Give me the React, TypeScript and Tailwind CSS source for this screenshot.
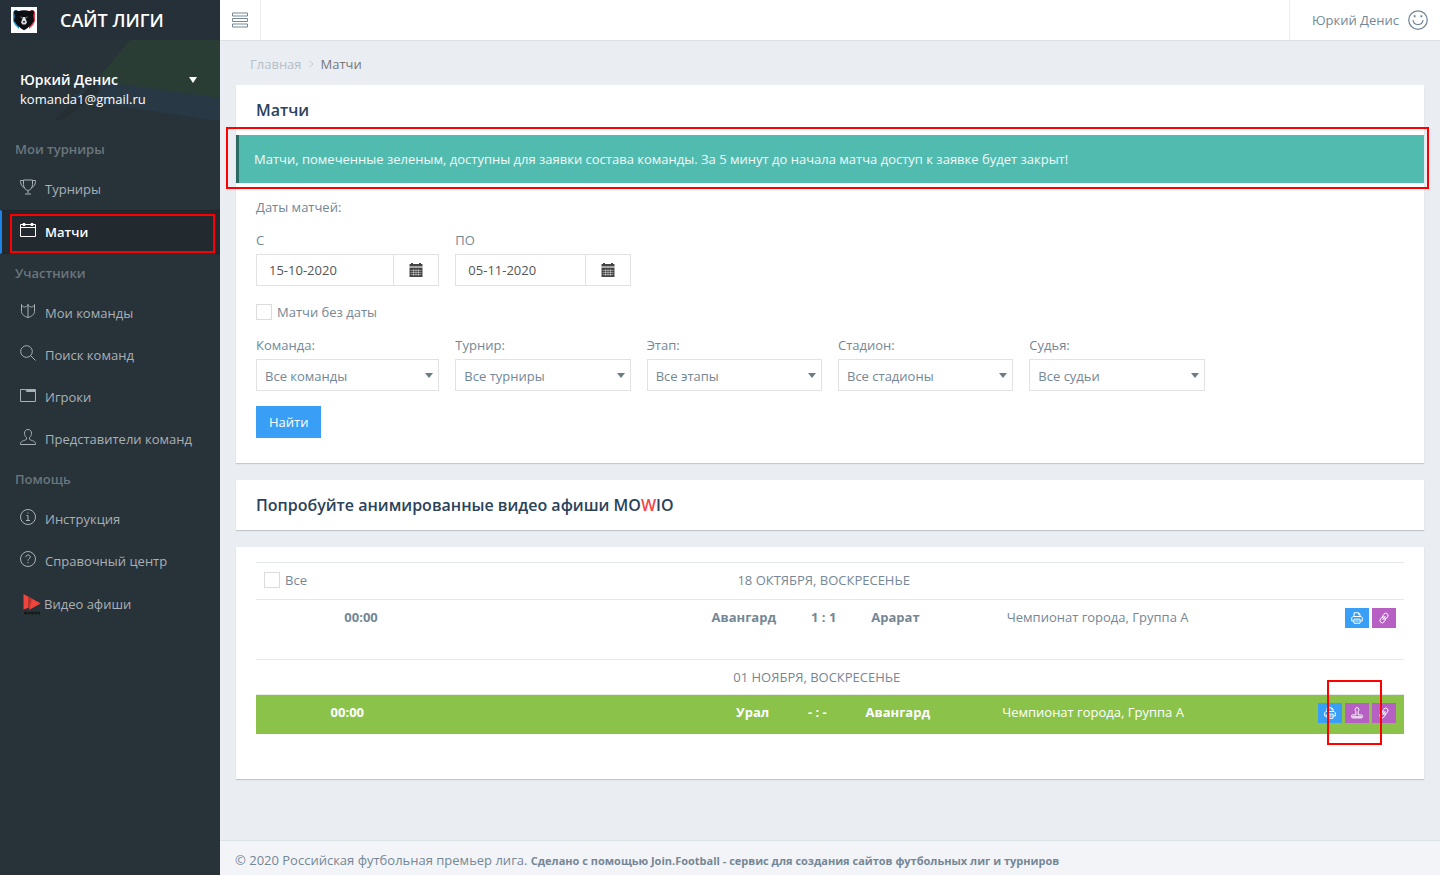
import React from 'react';

interface MenuItem {
    title: string;
    icon: React.ReactNode;
    active?: boolean;
}

interface MenuGroup {
    title: string;
    items: MenuItem[];
}

const Icon = ({ children, size = 16 }: { children: React.ReactNode; size?: number }) => (
    <svg width={size} height={size} viewBox="0 0 16 16" fill="none" stroke="currentColor" strokeWidth={1} className="shrink-0" aria-hidden="true">
        {children}
    </svg>
);

const TrophyIcon = () => (
    <Icon>
        <path d="M3.5 1h9v4.500c0 3-1.700 5.500-4.500 6-2.800-.5-4.500-3-4.500-6V1zM3.500 1.500h-3c0 3.500 1 6 4.500 7.500M12.500 1.500h3c0 3.500-1 6-4.500 7.500M8 11.500v3M5 15h6" />
    </Icon>
);

const CalendarIcon = () => (
    <Icon>
        <path d="M.5 2.500h15v12H.5zM.5 5.500h15M3 1.500h2v2H3zM11 1.500h2v2h-2z" />
    </Icon>
);

const ShieldIcon = () => (
    <Icon>
        <path d="M8 1.500C7.500 3 6 4 4.500 4 3 4 1.800 3.200 1.500 1.500v7C1.500 11.500 4.500 13.500 8 14.500c3.500-1 6.500-3 6.500-6v-7C14.200 3.200 13 4 11.500 4 10 4 8.500 3 8 1.500zM8 1.500v13" />
    </Icon>
);

const SearchIcon = () => (
    <Icon>
        <circle cx="6.500" cy="6.500" r="5.800" />
        <path d="M10.500 10.500l5 5" />
    </Icon>
);

const FolderIcon = () => (
    <Icon>
        <path d="M.5 2.500h5l1 2h9v10H.5zM6 2.500h9.500v2M6.500 3.500h9" />
    </Icon>
);

const UserIcon = () => (
    <Icon>
        <path d="M8 .5C5.800.5 4.500 2 4.500 4.200c0 1.800.7 3.300 2 4.300v1.500C6.500 11.500.5 11.500.5 14.500v1h15v-1c0-3-6-3-6-4.500V8.500c1.300-1 2-2.500 2-4.300C11.500 2 10.200.5 8 .5z" />
    </Icon>
);

const InfoIcon = () => (
    <Icon>
        <circle cx="8" cy="8" r="7.500" />
        <path d="M6.500 6.500H8v5M6 11.500h4M7.500 4h1" />
    </Icon>
);

const HelpIcon = () => (
    <Icon>
        <circle cx="8" cy="8" r="7.500" />
        <path d="M5.800 6.200C5.800 4.800 6.700 4 8 4s2.300.8 2.300 2c0 1.500-2.300 1.700-2.300 3.700M8 11v1.200" />
    </Icon>
);

const MowioIcon = () => (
    <svg width="18" height="23" viewBox="0 0 18 23" className="shrink-0" aria-hidden="true">
        <path d="M.5 1L17.500 10.500.5 16.500z" fill="#f0453c" />
        <path d="M5 3.500v12l8-7.500z" fill="#b8322e" />
        <path d="M9 6l8.500 4.500L6 17z" fill="#f0453c" />
        <path d="M1 20h16" stroke="#14191c" strokeWidth="2.500" strokeDasharray="3 .5" />
    </svg>
);

const PrinterIcon = () => (
    <Icon size={12}>
        <path strokeWidth={1.300} d="M4 6V1h6l2 2v3M4 12H1V7.500L2.500 6h11L15 7.500V12h-3M4 9.500h8V15H4zM6 12h4M10 1v2h2" />
    </Icon>
);

const LinkIcon = () => (
    <Icon size={12}>
        <g strokeWidth={1.200} transform="rotate(35 8 8)">
            <rect x="5" y=".8" width="6" height="8.500" rx="3" />
            <rect x="5" y="6.700" width="6" height="8.500" rx="3" />
            <path d="M8 5v6" />
        </g>
    </Icon>
);

const StampIcon = () => (
    <Icon size={12}>
        <path strokeWidth={1.300} d="M6.500 10.500V6C4.800 4.500 5 .8 8 .8S11.200 4.500 9.500 6v4.500H14c1.900 0 1.900 4 0 4H2c-1.900 0-1.900-4 0-4zM1.500 13h13" />
    </Icon>
);

const SmileIcon = () => (
    <Icon size={20}>
        <circle cx="8" cy="8" r="7.400" />
        <path d="M4 8c.3 2.300 1.900 3.700 4 3.700S11.700 10.300 12 8" />
        <path d="M5.300 4.200v1.600M10.700 4.200v1.600" strokeWidth={1.500} />
    </Icon>
);

const DateIcon = () => (
    <svg width="14" height="14" viewBox="0 0 14 14" fill="#444" aria-hidden="true">
        <path d="M.5 1H2V0h2v1h6V0h2v1h1.500v2.500H.5z" />
        <path d="M.5 3.500h13V5H.5z" fill="#aaa" />
        <path d="M.5 5h13v9H.5z" />
        <path d="M1.500 7.500h11M1.500 9.500h11M1.500 11.500h11M4.500 6v7M7 6v7M9.500 6v7" stroke="#fff" strokeWidth=".4" />
    </svg>
);

const BearLogo = () => (
    <svg width="26" height="26" viewBox="0 0 26 26" className="shrink-0" aria-hidden="true">
        <path fill="#fff" d="M0 0h26v26H0z" />
        <path fill="#1ba3dc" d="M2 5l2-2 4 1v18l-4-4-2-4z" />
        <path fill="#ee3340" d="M24 5l-2-2-4 1v18l4-4 2-4z" />
        <path fill="#0b0d10" d="M3 5.500C3 3 5.500 2.500 7 4.200 11 3 15 3 19 4.200 20.500 2.500 23 3 23 5.500L22.300 9l.7 5-3 4-4 3.500-3 1.800-3-1.800L6 18l-3-4 .7-5z" />
        <path fill="#70757a" d="M8.500 9.500l3 .5-.5 1.500zM17.500 9.500l-3 .5.5 1.500z" />
        <path fill="#d9dcde" d="M12 10h2l2 5.500-1.500 2h-3L10 15.500z" />
        <path fill="#0b0d10" d="M12 14h2l-.5 1.700h-1z" />
    </svg>
);

const menu: MenuGroup[] = [
    {
        title: 'Мои турниры',
        items: [
            { title: 'Турниры', icon: <TrophyIcon /> },
            { title: 'Матчи', icon: <CalendarIcon />, active: true },
        ],
    },
    {
        title: 'Участники',
        items: [
            { title: 'Мои команды', icon: <ShieldIcon /> },
            { title: 'Поиск команд', icon: <SearchIcon /> },
            { title: 'Игроки', icon: <FolderIcon /> },
            { title: 'Представители команд', icon: <UserIcon /> },
        ],
    },
    {
        title: 'Помощь',
        items: [
            { title: 'Инструкция', icon: <InfoIcon /> },
            { title: 'Справочный центр', icon: <HelpIcon /> },
        ],
    },
];

const filters = [
    { id: 'team', label: 'Команда:', value: 'Все команды' },
    { id: 'tournament', label: 'Турнир:', value: 'Все турниры' },
    { id: 'stage', label: 'Этап:', value: 'Все этапы' },
    { id: 'stadium', label: 'Стадион:', value: 'Все стадионы' },
    { id: 'referee', label: 'Судья:', value: 'Все судьи' },
];

// Red frame drawn over the element it highlights
const Highlight = ({ className }: { className: string }) => (
    <span className={`pointer-events-none absolute z-10 border-2 border-[#ff0000] ${className}`} />
);

const Sidebar = () => (
    <aside className="w-[220px] shrink-0 bg-[#283239] text-[#a9b1b6]">
        <div className="flex h-10 items-center gap-[23px] bg-[#263038] pl-[11px] text-white">
            <BearLogo />
            <span className="text-lg font-semibold">САЙТ ЛИГИ</span>
        </div>
        <div className="relative h-20">
            <svg className="absolute inset-0 h-full w-full" viewBox="0 0 220 80" preserveAspectRatio="none" aria-hidden="true">
                <path d="M130 0h90v58L95 42z" fill="#2a3d35" />
                <path d="M95 42l25 2 100 14v22h-10L70 58z" fill="#283845" />
                <path d="M95 42L54 80h8l38-28z" fill="#242e33" />
            </svg>
            <div className="relative px-5 pt-[30px] text-white">
                <button type="button" className="flex w-full items-center justify-between pr-[3px] text-sm leading-5 font-semibold">
                    Юркий Денис
                    <svg width="8" height="6" viewBox="0 0 8 6" fill="currentColor" aria-hidden="true">
                        <path d="M0 0h8L4 6z" />
                    </svg>
                </button>
                <div className="leading-[18px]">komanda1@gmail.ru</div>
            </div>
        </div>
        <nav className="pt-[10px]">
            {menu.map(group => (
                <div key={group.title}>
                    <div className="flex h-[38px] items-center px-[15px] font-semibold text-[#6b767d]">{group.title}</div>
                    {group.items.map(item => (
                        <a
                            key={item.title}
                            href="#"
                            className={
                                item.active
                                    ? 'relative flex h-11 items-center gap-[9px] border-y border-l-2 border-y-[#1f272c] border-l-[#1d83e6] bg-[#222a2f] pl-[18px] font-semibold text-white'
                                    : 'flex h-[42px] items-center gap-[9px] pl-5'
                            }
                        >
                            <span className="pb-1">{item.icon}</span>
                            {item.title}
                            {item.active && <Highlight className="top-[3px] right-[5px] bottom-0 left-2" />}
                        </a>
                    ))}
                </div>
            ))}
            <a href="#" className="flex h-11 items-center gap-[3px] pl-[23px]">
                <MowioIcon />
                Видео афиши
            </a>
        </nav>
    </aside>
);

const DateField = ({ id, label, value }: { id: string; label: string; value: string }) => (
    <div className="px-2 first:pl-0">
        <label htmlFor={id} className="block leading-5">{label}</label>
        <div className="mt-1 flex h-8 border border-[#e2e2e4] text-[#555]">
            <input id={id} type="text" defaultValue={value} className="w-full min-w-0 px-3 outline-none" />
            <button type="button" aria-label="Открыть календарь" className="flex w-[45px] shrink-0 items-center justify-center border-l border-[#e2e2e4]">
                <DateIcon />
            </button>
        </div>
    </div>
);

const SelectField = ({ id, label, value }: { id: string; label: string; value: string }) => (
    <div className="px-2 first:pl-0">
        <label htmlFor={id} className="block leading-5">{label}</label>
        <div className="relative mt-1">
            <select id={id} className="block h-8 w-full appearance-none rounded-none border border-[#e2e2e4] bg-white pt-[2px] pl-2 outline-none">
                <option>{value}</option>
            </select>
            <svg width="8" height="5" viewBox="0 0 8 5" fill="#6b7c85" className="pointer-events-none absolute top-[14px] right-[6px]" aria-hidden="true">
                <path d="M0 0h8L4 5z" />
            </svg>
        </div>
    </div>
);

const Card = ({ children, className = '' }: { children: React.ReactNode; className?: string }) => (
    <section className={`bg-white shadow-[0_1px_1px_#c3c8cc] ${className}`}>{children}</section>
);

const ActionButton = ({ label, color, children }: { label: string; color: string; children: React.ReactNode }) => (
    <button type="button" aria-label={label} className={`flex h-5 items-center justify-center px-[6px] text-white ${color}`}>
        {children}
    </button>
);

const Matches = () => (
    <Card className="mt-[17px] px-5 pt-[15px] pb-[45px]">
        <table className="w-full table-fixed border-collapse">
            <colgroup>
                <col className="w-[7%]" />
                <col className="w-[27.2%]" />
                <col className="w-[11.8%]" />
                <col className="w-[6.9%]" />
                <col className="w-[11.8%]" />
                <col />
                <col className="w-[96px]" />
            </colgroup>
            <tbody>
                <tr className="h-[37px] border-y border-[#e5e7e9]">
                    <td colSpan={2} className="px-2 pb-[2px]">
                        <label className="flex items-center gap-[5px]">
                            <input type="checkbox" className="h-4 w-4 appearance-none border border-[#dcdcde] bg-white" />
                            Все
                        </label>
                    </td>
                    <td colSpan={3} className="pb-[2px] text-center">18 ОКТЯБРЯ, ВОСКРЕСЕНЬЕ</td>
                    <td colSpan={2} />
                </tr>
                <tr className="h-[39px] align-top">
                    <td />
                    <td className="px-2 pt-[7px] font-bold">00:00</td>
                    <td className="px-2 pt-[7px] text-right font-bold">Авангард</td>
                    <td className="pt-[7px] text-center font-bold">1 : 1</td>
                    <td className="px-2 pt-[7px] font-bold">Арарат</td>
                    <td className="px-2 pt-[7px]">Чемпионат города, Группа А</td>
                    <td className="pt-2 pr-2">
                        <div className="flex justify-end gap-[3px]">
                            <ActionButton label="Печать" color="bg-[#399ff6]"><PrinterIcon /></ActionButton>
                            <ActionButton label="Ссылка" color="bg-[#b760c4]"><LinkIcon /></ActionButton>
                        </div>
                    </td>
                </tr>
            </tbody>
        </table>
        <table className="mt-5 w-full table-fixed border-collapse">
            <colgroup>
                <col className="w-[5.8%]" />
                <col className="w-[27.6%]" />
                <col className="w-[12%]" />
                <col className="w-[7%]" />
                <col className="w-[11.9%]" />
                <col />
                <col className="w-[96px]" />
            </colgroup>
            <tbody>
                <tr className="h-[35px] border-y border-[#e5e7e9]">
                    <td colSpan={2} />
                    <td colSpan={3} className="text-center">01 НОЯБРЯ, ВОСКРЕСЕНЬЕ</td>
                    <td colSpan={2} />
                </tr>
                <tr className="h-10 bg-[#8bc34a] align-top text-white">
                    <td />
                    <td className="px-2 pt-[7px] font-bold">00:00</td>
                    <td className="px-2 pt-[7px] text-right font-bold">Урал</td>
                    <td className="pt-[7px] text-center font-bold">- : -</td>
                    <td className="px-2 pt-[7px] font-bold">Авангард</td>
                    <td className="px-2 pt-[7px]">Чемпионат города, Группа А</td>
                    <td className="pt-2 pr-2">
                        <div className="flex justify-end gap-[3px]">
                            <ActionButton label="Печать" color="bg-[#399ff6]"><PrinterIcon /></ActionButton>
                            <div className="relative">
                                <ActionButton label="Заявить состав" color="bg-[#b760c4]"><StampIcon /></ActionButton>
                                <Highlight className="-top-[23px] -right-[13px] -bottom-[22px] -left-[18px]" />
                            </div>
                            <ActionButton label="Ссылка" color="bg-[#b760c4]"><LinkIcon /></ActionButton>
                        </div>
                    </td>
                </tr>
            </tbody>
        </table>
    </Card>
);

export default function App() {
    return (
        <div className="flex min-h-screen bg-[#eaeef3] font-['Open_Sans',sans-serif] text-[13px] leading-5 text-[#748796]">
            <Sidebar />
            <div className="flex min-w-0 flex-1 flex-col">
                <header className="flex h-[41px] items-stretch justify-between border-b border-[#dcdfe3] bg-white">
                    <button type="button" aria-label="Меню" className="flex w-[41px] items-center justify-center border-r border-[#ebedf0]">
                        <Icon>
                            <path d="M.5 1h15v3H.5zM.5 6.500h15v3H.5zM.5 12h15v3H.5z" />
                        </Icon>
                    </button>
                    <a href="#" className="flex items-center gap-[9px] border-l border-[#ebedf0] pr-3 pl-[22px]">
                        Юркий Денис
                        <SmileIcon />
                    </a>
                </header>

                <main className="flex-1 px-4 pb-[60px]">
                    <div className="flex h-11 items-center gap-[7px] px-[14px] pt-[2px]">
                        <a href="#" className="text-[#b4bfc9]">Главная</a>
                        <svg width="5" height="8" viewBox="0 0 5 8" fill="none" stroke="#c3cad1" aria-hidden="true">
                            <path d="M.5.5L4 4 .5 7.500" />
                        </svg>
                        <span className="text-[#777]">Матчи</span>
                    </div>

                    <Card className="pb-[25px]">
                        <h1 className="px-5 py-[15px] text-base leading-5 font-semibold text-[#2b425b]">Матчи</h1>
                        <div className="relative border-l-[3px] border-[#2a6b62] bg-[#52bbb0] px-[15px] py-[14px] text-[#effaf8]">
                            Матчи, помеченные зеленым, доступны для заявки состава команды. За 5 минут до начала матча доступ к заявке будет закрыт!
                            <Highlight className="-top-2 -right-[5px] -bottom-[6px] -left-[13px]" />
                        </div>
                        <form className="px-5 pt-[14px]" onSubmit={e => e.preventDefault()}>
                            <div>Даты матчей:</div>
                            <div className="mt-[13px] grid grid-cols-6">
                                <DateField id="from" label="С" value="15-10-2020" />
                                <DateField id="to" label="ПО" value="05-11-2020" />
                            </div>
                            <label className="mt-4 flex items-center gap-[5px]">
                                <input type="checkbox" className="h-4 w-4 appearance-none border border-[#dcdcde] bg-white" />
                                Матчи без даты
                            </label>
                            <div className="mt-[13px] grid grid-cols-6">
                                {filters.map(f => (
                                    <SelectField key={f.id} {...f} />
                                ))}
                            </div>
                            <button type="submit" className="mt-[15px] h-8 bg-[#399ff6] px-[13px] text-white">Найти</button>
                        </form>
                    </Card>

                    <Card className="mt-[17px] px-5 py-[15px]">
                        <h2 className="text-base leading-5 font-semibold text-[#2b425b]">
                            Попробуйте анимированные видео афиши MO<span className="text-[#f5474a]">W</span>IO
                        </h2>
                    </Card>

                    <Matches />
                </main>

                <footer className="h-[35px] border-t border-[#dce3e6] bg-[#f3f4f8] px-[15px] pt-[9px]">
                    © 2020 Российская футбольная премьер лига.{' '}
                    <a href="#" className="text-[11px] font-bold">Сделано с помощью Join.Football - сервис для создания сайтов футбольных лиг и турниров</a>
                </footer>
            </div>
        </div>
    );
}
